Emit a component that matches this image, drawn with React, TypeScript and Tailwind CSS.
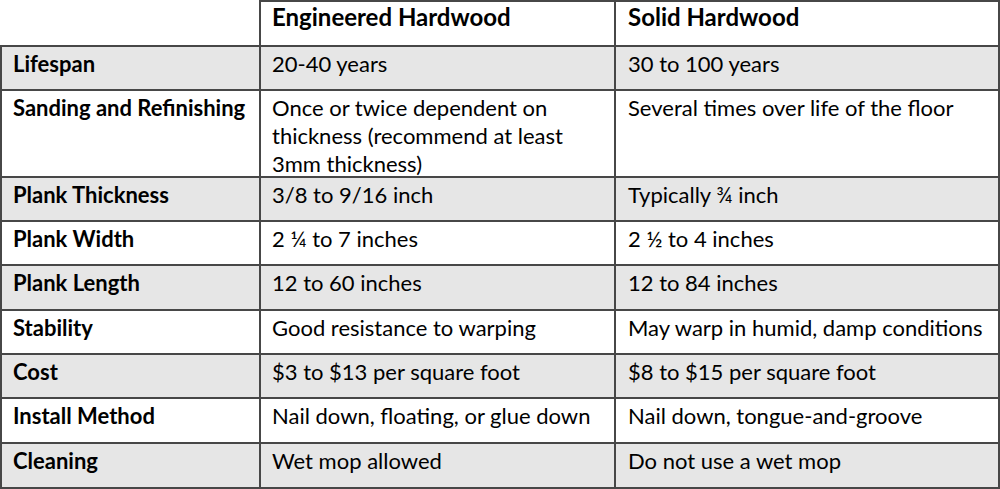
import React from "react";

const rows: { label: string; eng: string; solid: string; h: string; shade: boolean }[] = [
  { label: "Lifespan", eng: "20-40 years", solid: "30 to 100 years", h: "h-[44px]", shade: true },
  {
    label: "Sanding and Refinishing",
    eng: "Once or twice dependent on thickness (recommend at least 3mm thickness)",
    solid: "Several times over life of the floor",
    h: "h-[87px]",
    shade: false,
  },
  { label: "Plank Thickness", eng: "3/8 to 9/16 inch", solid: "Typically ¾ inch", h: "h-[44px]", shade: true },
  { label: "Plank Width", eng: "2 ¼ to 7 inches", solid: "2 ½ to 4 inches", h: "h-[44px]", shade: false },
  { label: "Plank Length", eng: "12 to 60 inches", solid: "12 to 84 inches", h: "h-[45px]", shade: true },
  { label: "Stability", eng: "Good resistance to warping", solid: "May warp in humid, damp conditions", h: "h-[44px]", shade: false },
  { label: "Cost", eng: "$3 to $13 per square foot", solid: "$8 to $15 per square foot", h: "h-[44px]", shade: true },
  { label: "Install Method", eng: "Nail down, floating, or glue down", solid: "Nail down, tongue-and-groove", h: "h-[45px]", shade: false },
  { label: "Cleaning", eng: "Wet mop allowed", solid: "Do not use a wet mop", h: "h-[45px]", shade: true },
];

export default function App() {
  return (
    <div
      className="w-[1000px] h-[489px] bg-white text-black overflow-hidden"
      style={{ fontFamily: "Lato, 'Open Sans', sans-serif" }}
    >
      <div className="grid grid-cols-[261px_355px_384px] text-[22px] leading-[28px]">
        <div className="h-[47px] border-r-2 border-b-2 border-[#474747]" />
        <div className="h-[47px] border-t-2 border-r-2 border-b-2 border-[#474747] pl-[11px] pt-[1px] font-bold text-[24px]">
          Engineered Hardwood
        </div>
        <div className="h-[47px] border-t-2 border-r-2 border-b-2 border-[#474747] pl-[12px] pt-[1px] font-bold text-[24px]">
          Solid Hardwood
        </div>
        {rows.map((r) => (
          <React.Fragment key={r.label}>
            <div
              className={`${r.h} ${r.shade ? "bg-[#e6e6e6]" : "bg-white"} border-l-2 border-r-2 border-b-2 border-[#474747] pl-[11px] pt-[3px] font-bold`}
            >
              {r.label}
            </div>
            <div
              className={`${r.h} ${r.shade ? "bg-[#e6e6e6]" : "bg-white"} border-r-2 border-b-2 border-[#474747] pl-[11px] pr-[20px] pt-[3px]`}
            >
              {r.eng}
            </div>
            <div
              className={`${r.h} ${r.shade ? "bg-[#e6e6e6]" : "bg-white"} border-r-2 border-b-2 border-[#474747] pl-[12px] pt-[3px] whitespace-nowrap`}
            >
              {r.solid}
            </div>
          </React.Fragment>
        ))}
      </div>
    </div>
  );
}
